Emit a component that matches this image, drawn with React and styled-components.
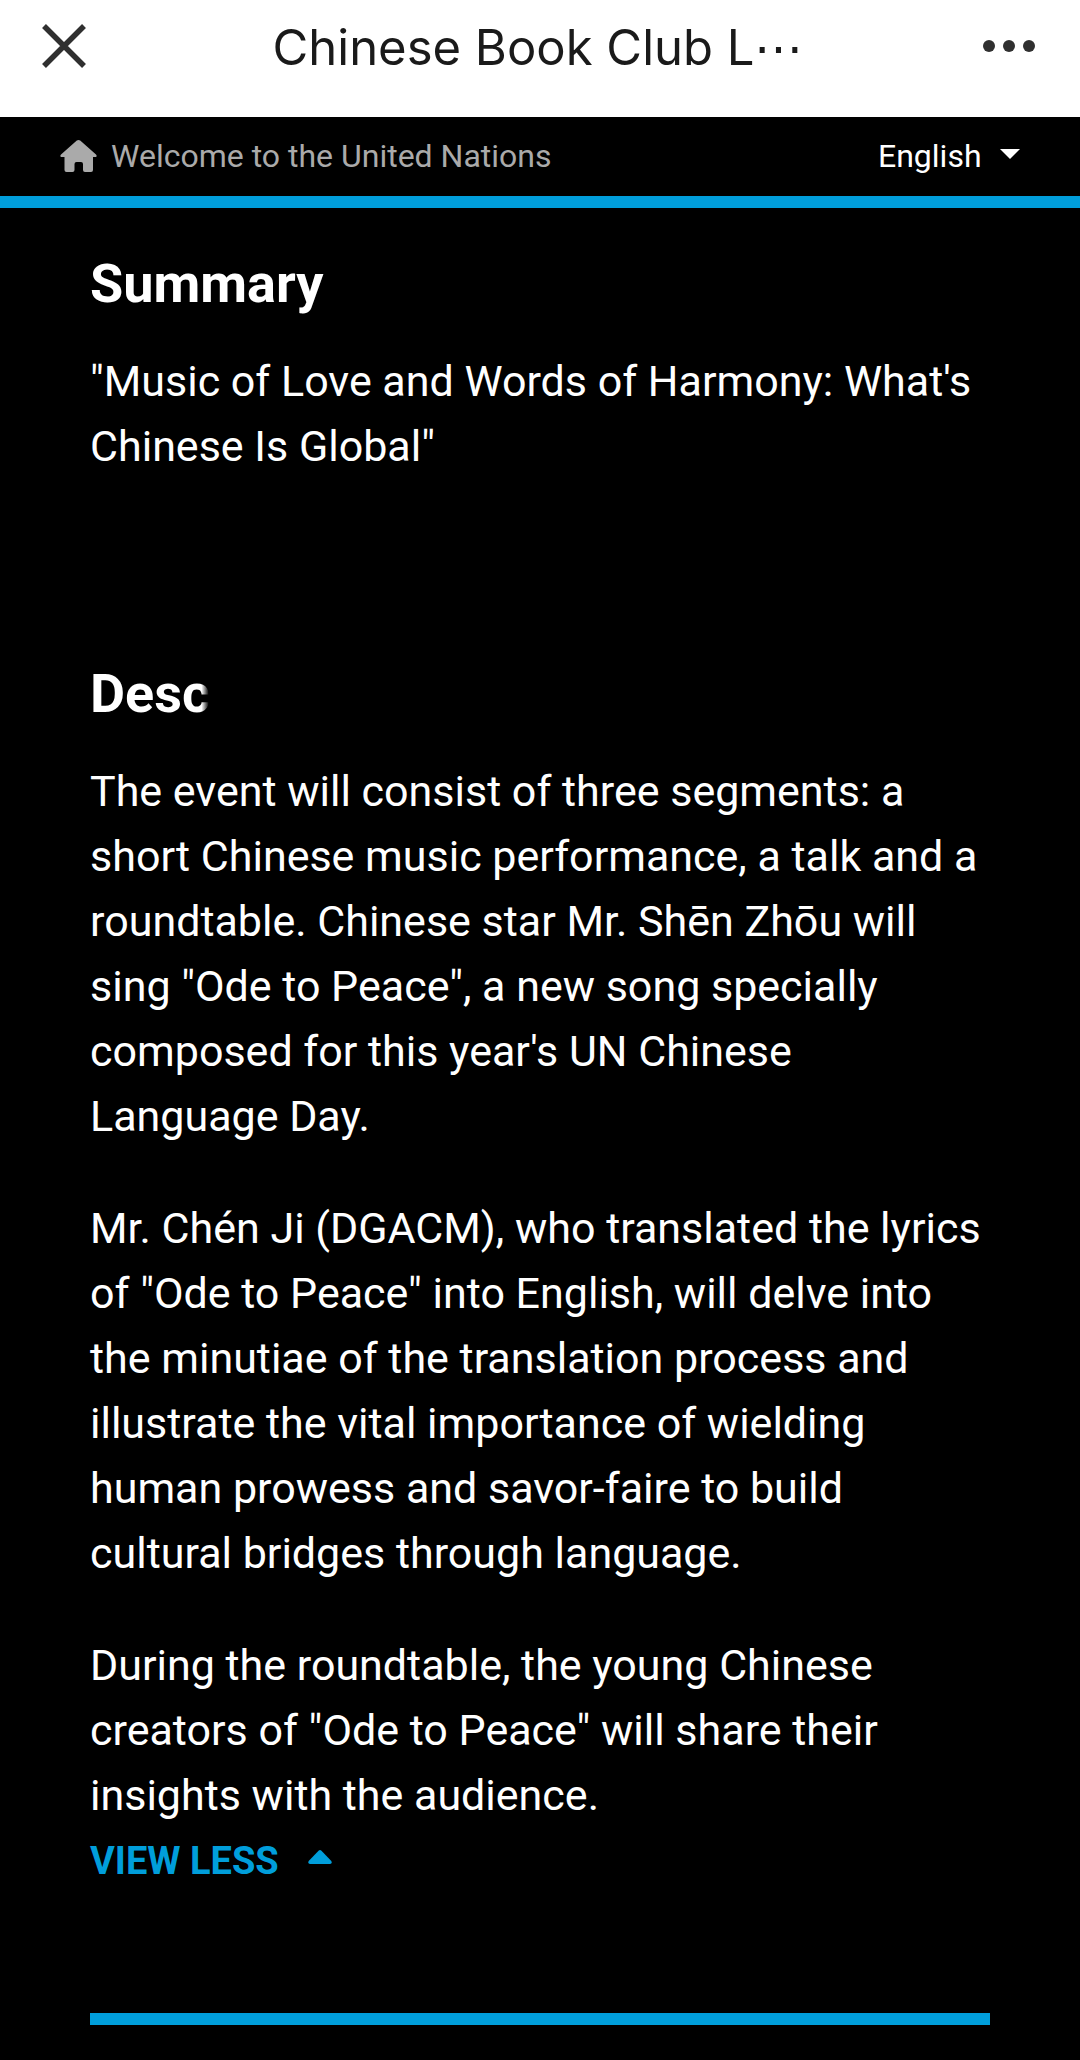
import React from "react";
import styled, { createGlobalStyle } from "styled-components";

const Global = createGlobalStyle`
  *, *::before, *::after { box-sizing: border-box; }
  body { margin: 0; background: #000; color: #fff; font-family: Roboto, "Noto Sans", sans-serif; }
  h1, h2, p { margin: 0; }
  button { border: 0; background: none; padding: 0; margin: 0; font: inherit; color: inherit; cursor: pointer; }
  svg { display: block; flex: none; }
`;

const TitleBar = styled.header`
  display: grid;
  grid-template-columns: 1fr auto 1fr;
  align-items: center;
  height: 117px;
  padding: 0 44px 21px 40px;
  background: #fff;
  color: #1a1a1a;
`;

const IconButton = styled.button`
  justify-self: ${(p) => p.$side};
  && { padding-bottom: 4px; color: #303030; }
`;

const PageTitle = styled.h1`
  font: 400 49px/60px Inter, sans-serif;
`;

const SiteBar = styled.nav`
  display: flex;
  align-items: center;
  justify-content: space-between;
  height: 91px;
  padding: 0 60px 2px;
  border-bottom: 12px solid #009edb;
  font-size: 32px;
  line-height: 40px;
`;

const HomeLink = styled.a`
  display: flex;
  align-items: center;
  gap: 14px;
  color: #aaa;
  text-decoration: none;
`;

const LanguagePicker = styled.label`
  display: flex;
  align-items: center;
  gap: 18px;
`;

const LanguageSelect = styled.select`
  appearance: none;
  margin: 0;
  padding: 0;
  border: 0;
  background: transparent;
  color: inherit;
  font: inherit;
`;

const Content = styled.main`
  padding: 42px 90px 35px;
`;

const Section = styled.section`
  margin-bottom: ${(p) => p.$after}px;
`;

const Heading = styled.h2`
  font-size: 54px;
  line-height: 68px;
  font-weight: 700;
  margin-bottom: 31px;
`;

const Fade = styled.span`
  background: linear-gradient(90deg, #fff 93%, #000 99%);
  background-clip: text;
  color: transparent;
`;

const Paragraph = styled.p`
  font-size: 43px;
  line-height: 65px;
  & + & { margin-top: 47px; }
`;

const ViewLess = styled.button`
  display: flex;
  align-items: center;
  gap: 29px;
  && {
    color: #009edb;
    font-size: 38px;
    font-weight: 700;
    line-height: 67px;
  }
`;

const Rule = styled.hr`
  height: 12px;
  margin: 0;
  border: 0;
  background: #009edb;
`;

export default function App() {
  return (
    <>
      <Global />
      <TitleBar>
        <IconButton $side="start" aria-label="Close">
          <svg width="48" height="46" viewBox="0 0 48 46" fill="none" stroke="currentColor" strokeWidth="5.500">
            <path d="M4 3L44 43M44 3L4 43" />
          </svg>
        </IconButton>
        <PageTitle>Chinese Book Club L⋯</PageTitle>
        <IconButton $side="end" aria-label="More options">
          <svg width="54" height="14" viewBox="0 0 54 14" fill="currentColor">
            <circle cx="7" cy="7" r="6" />
            <circle cx="27" cy="7" r="6" />
            <circle cx="47" cy="7" r="6" />
          </svg>
        </IconButton>
      </TitleBar>
      <SiteBar>
        <HomeLink href="#">
          <svg width="37" height="34" viewBox="0 0 37 34" fill="currentColor" aria-hidden="true">
            <path d="M16.800 1.600Q18.500 0.300 20.200 1.600L36 15.500Q37.200 16.700 36.200 18H33V31Q33 33 31 33H25Q23 33 23 31V25Q23 23 21 23H16.500Q14.500 23 14.500 25V31Q14.500 33 12.500 33H6.500Q4.500 33 4.500 31V18H0.800Q-0.200 16.700 1 15.500Z" />
          </svg>
          Welcome to the United Nations
        </HomeLink>
        <LanguagePicker>
          <LanguageSelect aria-label="Language" defaultValue="en">
            <option value="en">English</option>
          </LanguageSelect>
          <svg width="20" height="14" viewBox="0 0 20 14" fill="currentColor" aria-hidden="true">
            <path d="M0 0H20L10 10Z" />
          </svg>
        </LanguagePicker>
      </SiteBar>
      <Content>
        <Section $after={181}>
          <Heading>Summary</Heading>
          <Paragraph>"Music of Love and Words of Harmony: What's Chinese Is Global"</Paragraph>
        </Section>
        <Section $after={118}>
          <Heading><Fade>Desc</Fade></Heading>
          <Paragraph>The event will consist of three segments: a short Chinese music performance, a talk and a roundtable. Chinese star Mr. Shēn Zhōu will sing "Ode to Peace", a new song specially composed for this year's UN Chinese Language Day.</Paragraph>
          <Paragraph>Mr. Chén Ji (DGACM), who translated the lyrics of "Ode to Peace" into English, will delve into the minutiae of the translation process and illustrate the vital importance of wielding human prowess and savor-faire to build cultural bridges through language.</Paragraph>
          <Paragraph>During the roundtable, the young Chinese creators of "Ode to Peace" will share their insights with the audience.</Paragraph>
          <ViewLess>
            VIEW LESS
            <svg width="24" height="23" viewBox="0 0 24 23" fill="currentColor" aria-hidden="true">
              <path d="M10.800 0.600Q12 -0.400 13.200 0.600L23.300 11Q24.500 13.500 22 14H2Q-0.500 13.500 0.700 11Z" />
            </svg>
          </ViewLess>
        </Section>
        <Rule />
      </Content>
    </>
  );
}
